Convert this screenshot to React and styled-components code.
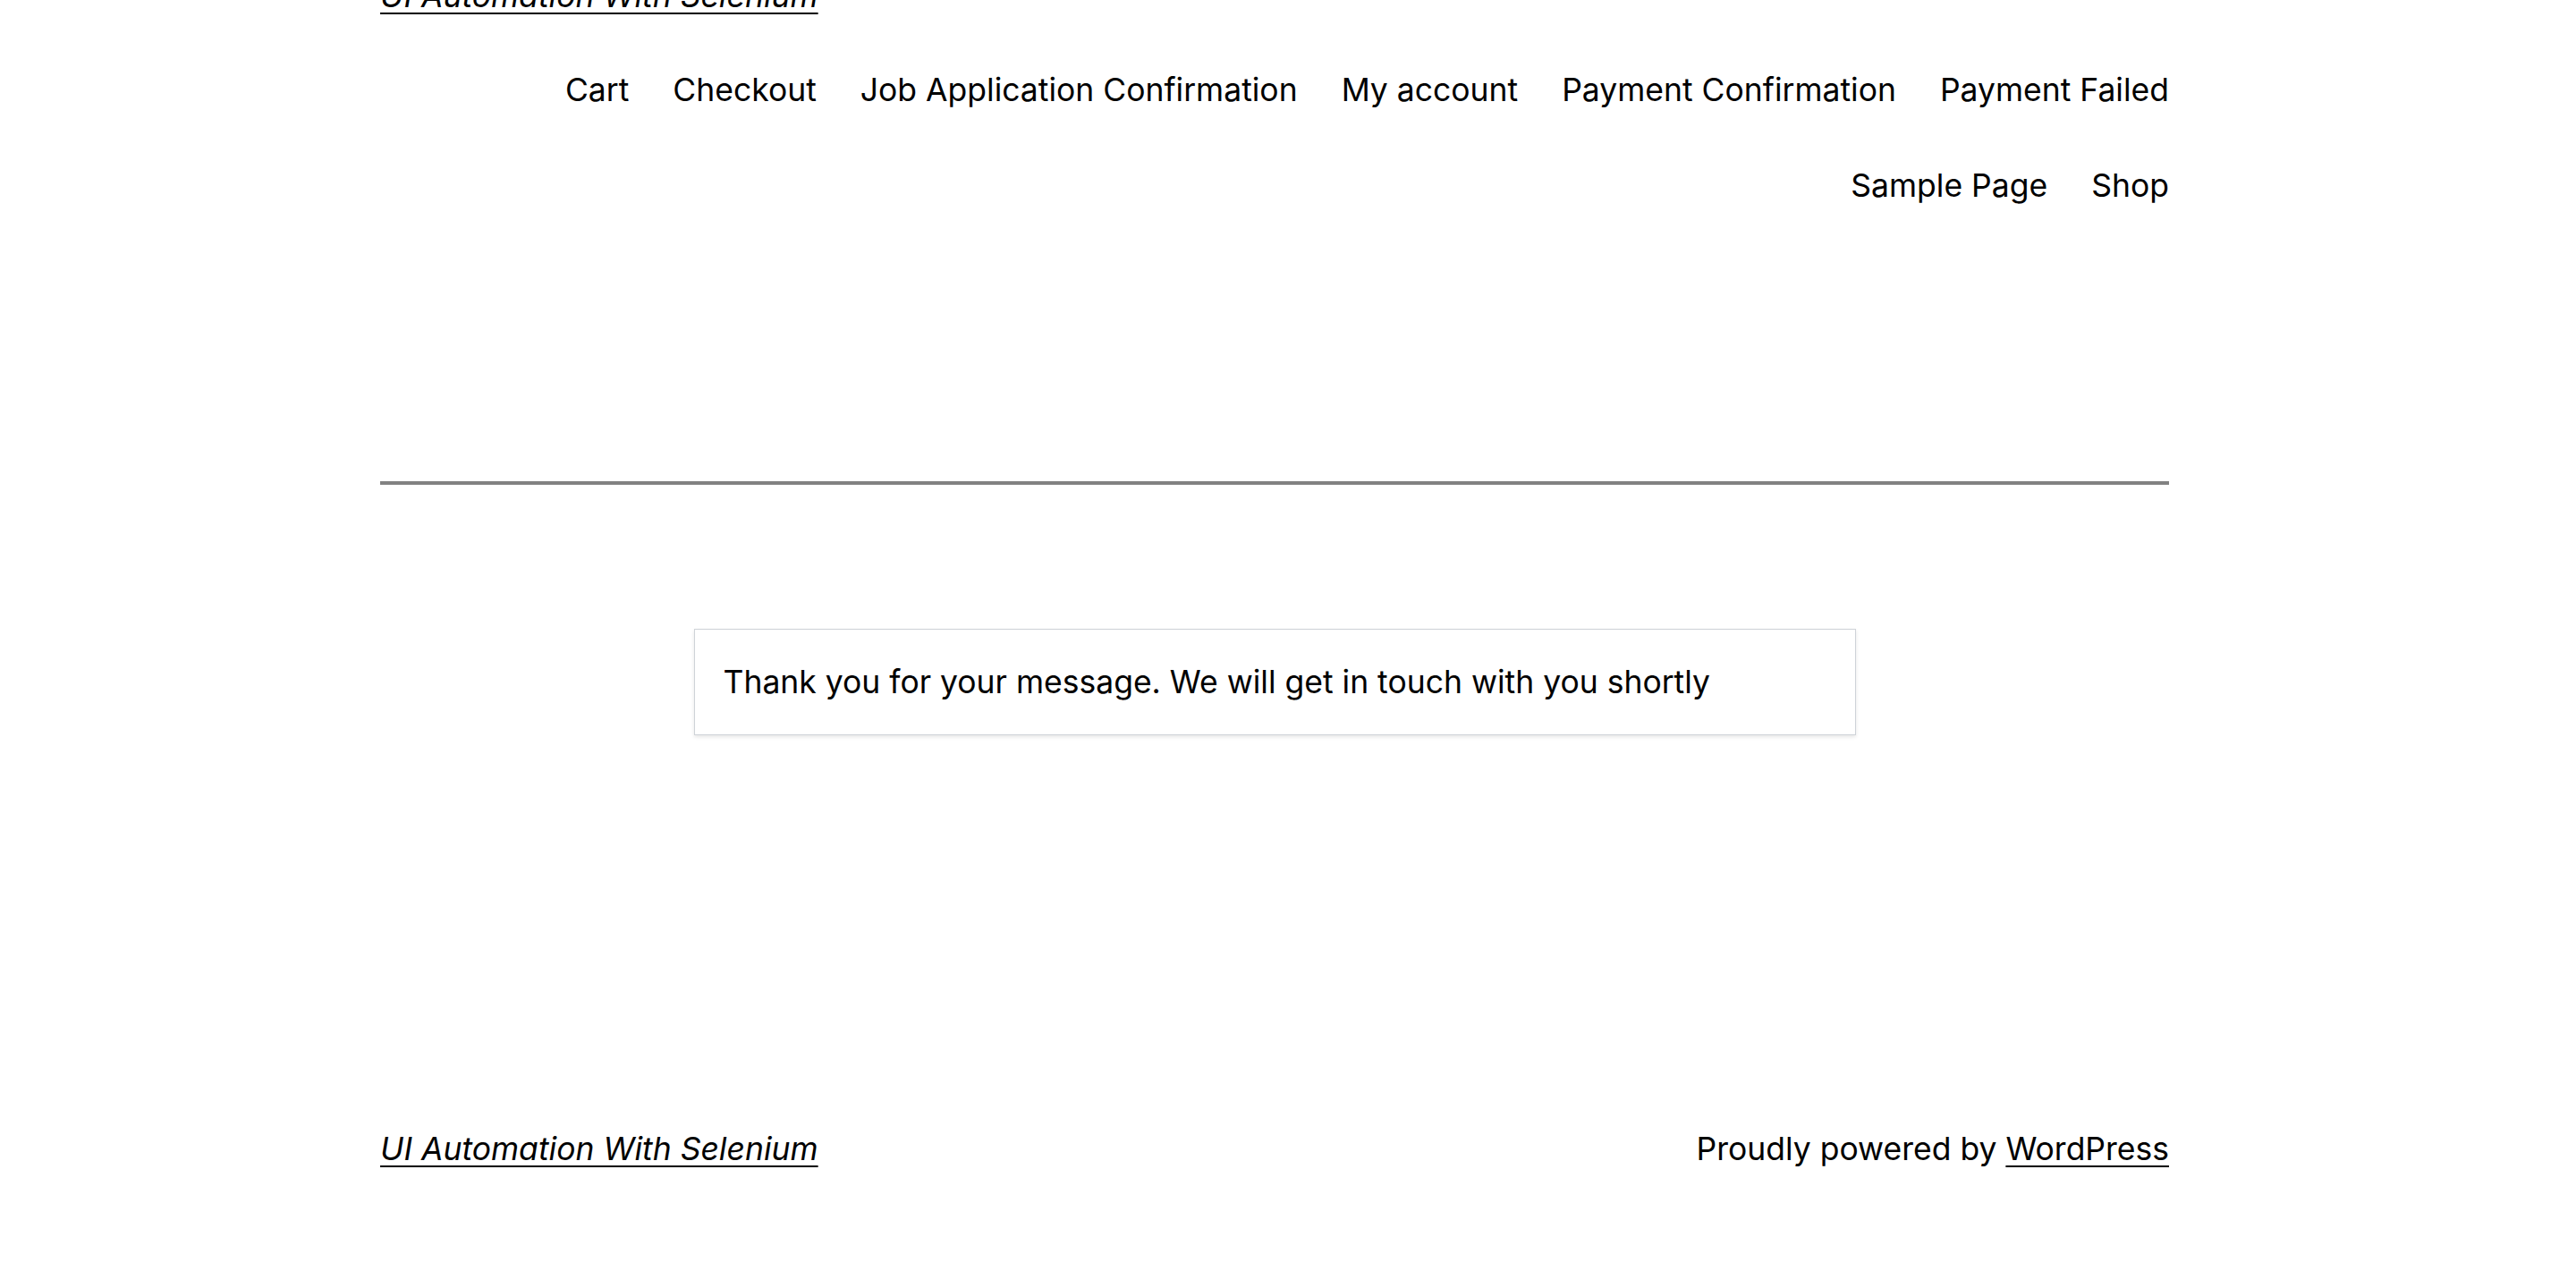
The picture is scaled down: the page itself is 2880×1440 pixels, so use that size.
import React from 'react';
import styled, { createGlobalStyle } from 'styled-components';

const GlobalStyle = createGlobalStyle`
  body {
    margin: 0;
    background: #ffffff;
    color: #000000;
    font-family: Inter, 'Noto Sans', 'Liberation Sans', sans-serif;
  }
`;

const navItems = [
  'Cart',
  'Checkout',
  'Job Application Confirmation',
  'My account',
  'Payment Confirmation',
  'Payment Failed',
  'Sample Page',
  'Shop',
];

export default function App() {
  return (
    <>
      <GlobalStyle />
      <Page>
        <Inner>
          <Header>
            <SiteTitle href="#">UI Automation With Selenium</SiteTitle>
            <Nav>
              {navItems.map((item) => (
                <NavLink key={item} href="#">
                  {item}
                </NavLink>
              ))}
            </Nav>
          </Header>
          <Separator />
          <Main>
            <MessageBox>
              Thank you for your message. We will get in touch with you shortly
            </MessageBox>
          </Main>
          <Footer>
            <SiteTitle href="#">UI Automation With Selenium</SiteTitle>
            <Credit>
              Proudly powered by <CreditLink href="#">WordPress</CreditLink>
            </Credit>
          </Footer>
        </Inner>
      </Page>
    </>
  );
}

const Page = styled.div`
  width: 2850px;
  font-size: 35.5px;
  line-height: 53px;
`;

const Inner = styled.div`
  width: 2000px;
  margin: -31px auto 0;
  display: flex;
  flex-direction: column;
`;

const Header = styled.header`
  display: flex;
  flex-direction: column;
  gap: 52px;
`;

const SiteTitle = styled.a`
  align-self: flex-start;
  color: #000000;
  font-style: italic;
  text-decoration: underline;
  text-decoration-thickness: 2px;
  text-underline-offset: 6px;
`;

const Nav = styled.nav`
  display: flex;
  flex-wrap: wrap;
  justify-content: flex-end;
  column-gap: 49px;
  row-gap: 54px;
  max-width: 1860px;
  margin-left: auto;
`;

const NavLink = styled.a`
  color: #000000;
  text-decoration: none;
  white-space: nowrap;
`;

const Separator = styled.hr`
  width: 100%;
  height: 4px;
  margin: 304px 0 0;
  border: none;
  background: #828282;
`;

const Main = styled.main`
  display: flex;
  justify-content: center;
  padding-top: 161px;
`;

const MessageBox = styled.div`
  width: 1299px;
  box-sizing: border-box;
  padding: 32px 32px;
  border: 1px solid #cfd3d8;
  box-shadow: 0 2px 4px rgba(0, 0, 0, 0.1);
`;

const Footer = styled.footer`
  display: flex;
  justify-content: space-between;
  align-items: center;
  margin-top: 436px;
  padding-bottom: 120px;
`;

const Credit = styled.div`
  white-space: nowrap;
`;

const CreditLink = styled.a`
  color: #000000;
  text-decoration: underline;
  text-decoration-thickness: 2px;
  text-underline-offset: 6px;
`;
